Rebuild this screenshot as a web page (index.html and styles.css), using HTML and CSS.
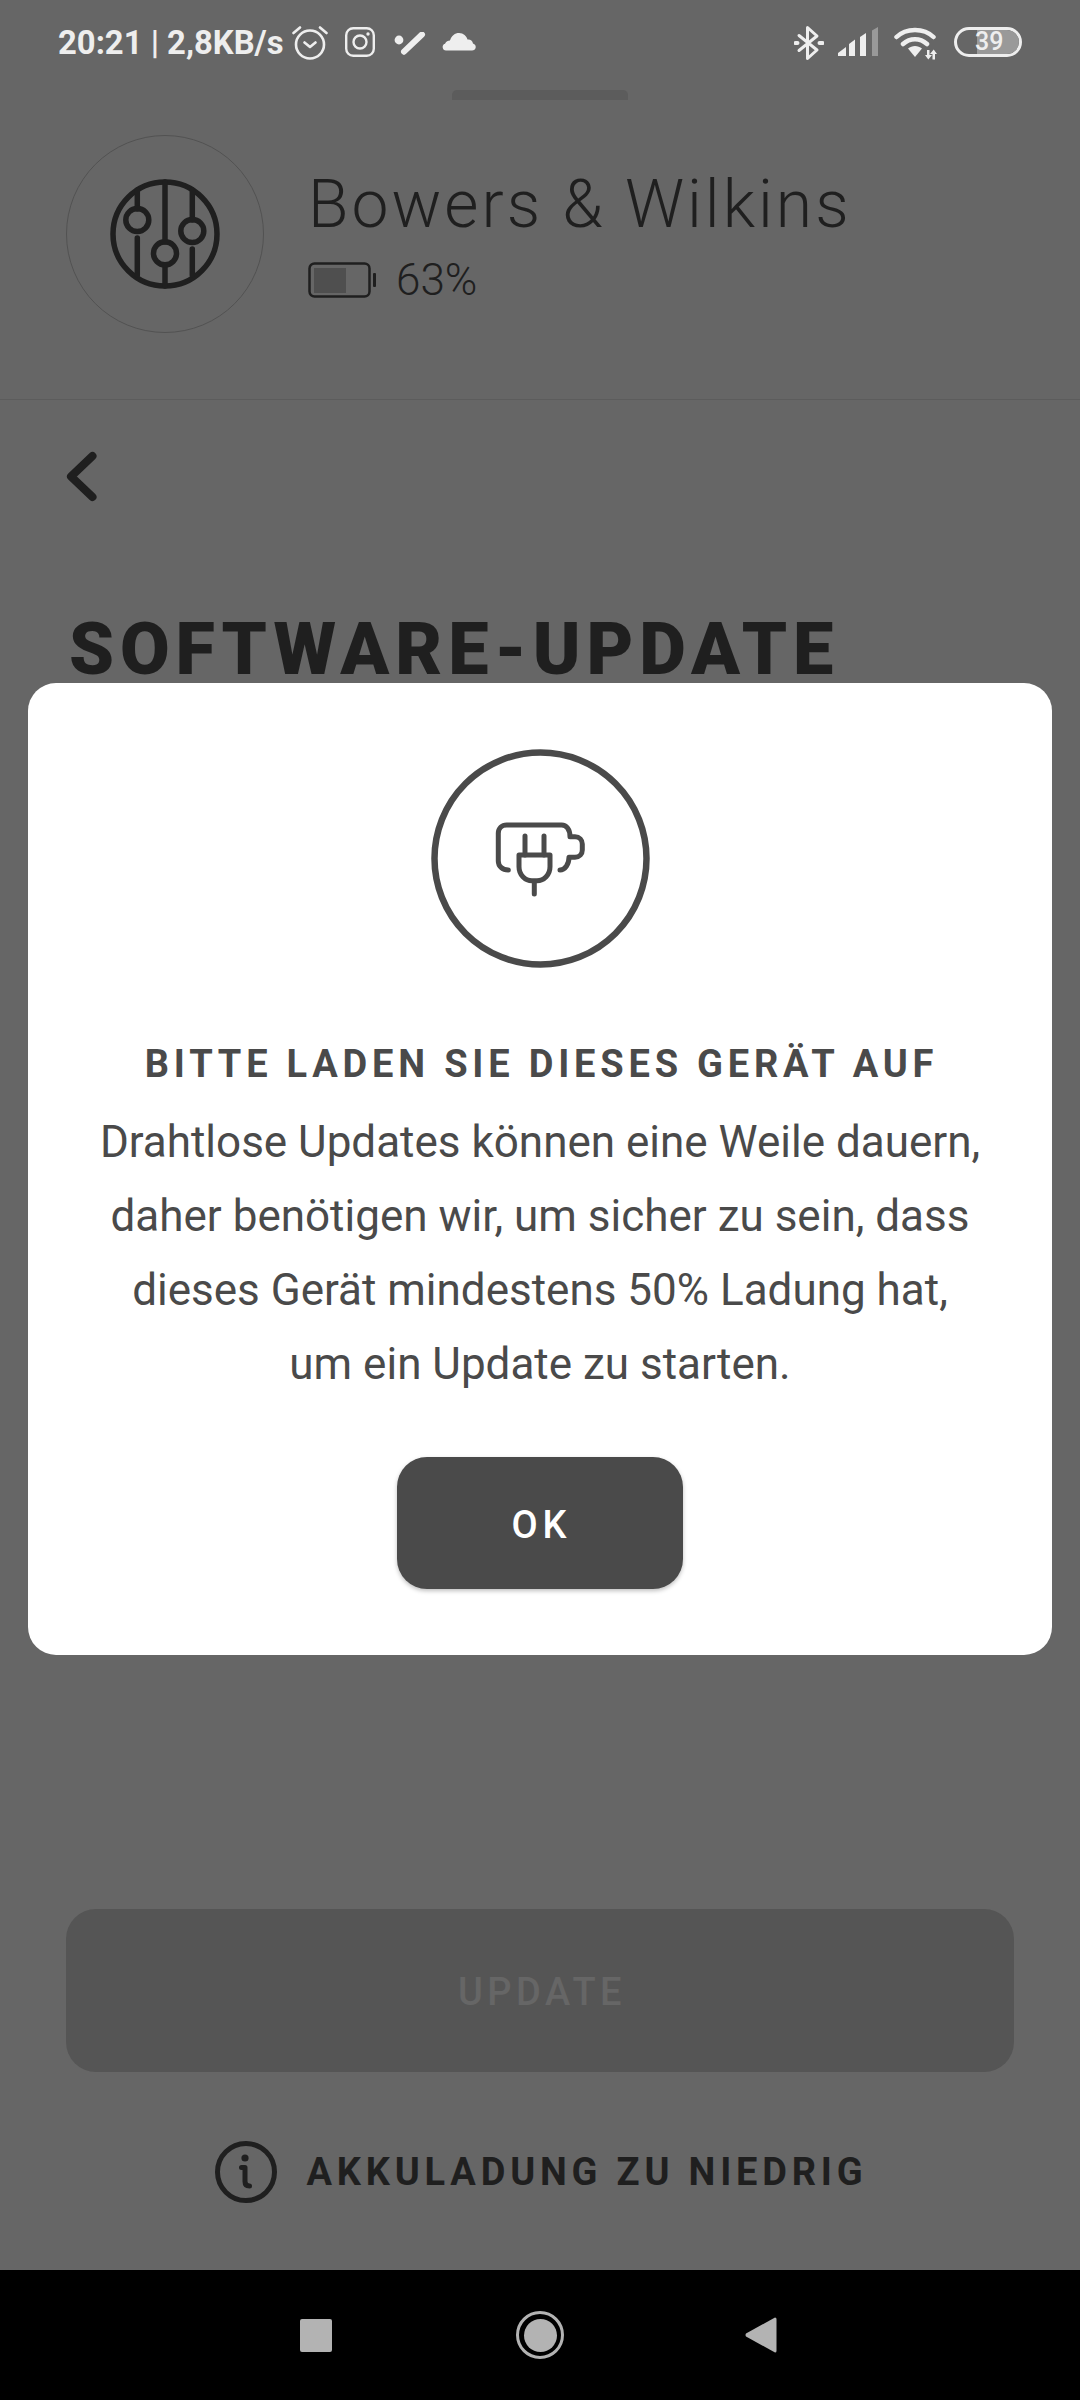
FILE: index.html
```html
<!DOCTYPE html>
<html lang="de">

<head>
    <meta charset="utf-8">
    <title>Software-Update</title>
    <link rel="stylesheet" href="styles.css">
</head>

<body>
    <div class="screen">
        <div class="status">
            <span class="clock">20:21 | 2,8KB/s</span>
            <svg class="alarm" width="36" height="36" viewBox="0 0 36 36" fill="none" stroke="#eee" stroke-width="2.6" stroke-linecap="round" stroke-linejoin="round">
                <circle cx="18" cy="19.500" r="14"/>
                <path d="M1.500 8 8 2.500M34.500 8 28 2.500M12.500 17.500 18 22l5.500-4.500"/>
            </svg>
            <svg class="insta" width="30" height="30" viewBox="0 0 30 30" fill="none" stroke="#eee" stroke-width="2.400">
                <rect x="1.200" y="1.200" width="27.600" height="27.600" rx="7"/>
                <circle cx="15" cy="15" r="6.500"/>
                <circle cx="23" cy="7" r="1.700" fill="#eee" stroke="none"/>
            </svg>
            <svg class="tick" width="32" height="24" viewBox="0 0 32 24" fill="#eee">
                <circle cx="5" cy="8" r="4.400"/>
                <path d="M10 19.700 28 2.500" stroke="#eee" stroke-width="6" stroke-linecap="round"/>
            </svg>
            <svg class="cloud" width="34" height="20" viewBox="0 0 34 20" fill="#eee">
                <path d="M4 18.500a3.500 3.500 0 0 1-1-6.800C4 9.500 6 8.500 8 8.500 9.500 3.500 13 1 17 1c4.500 0 7.500 3 8.500 6.500 2.500-.5 5 1 5.500 4 2 .8 3 2.200 2.700 4-.3 2-1.700 3-3.700 3z"/>
            </svg>
            <svg class="bluetooth" width="30" height="36" viewBox="0 0 30 36" fill="none" stroke="#eee" stroke-width="3" stroke-linecap="round" stroke-linejoin="round">
                <path d="M5 10.500 23 25 13.500 33.500V2.500L23 11 5 25.500"/>
                <path d="M1.500 18h2M25.500 18h3" stroke-width="4"/>
            </svg>
            <svg class="signal" width="40" height="30" viewBox="0 0 40 30">
                <path d="M0 29v-3l8-6v9zM11 29V17l6-4.500V29zM22 29V10l6-4v23z" fill="#eee"/>
                <path d="M34 29V3.500L40 0v29z" fill="#999"/>
            </svg>
            <svg class="wifi" width="44" height="34" viewBox="0 0 44 34" fill="none" stroke="#eee" stroke-width="4.500" stroke-linecap="round">
                <path d="M2.500 10C12 .5 30 .5 39.500 10M9 17c7-6.500 17-6.500 24 0"/>
                <path d="M14 21.500c4-3.500 10-3.500 14 0L21 30z" fill="#eee" stroke="none"/>
                <path d="M33 23h2.500v5H38l-3.700 4.500L31 28h2zM38.500 32.500V27H36l3.700-4.500 3.300 4.500h-2v5.500z" fill="#eee" stroke="none"/>
            </svg>
            <div class="batt">
                <div class="batt-level"></div>
                <span class="batt-num">39</span>
            </div>
        </div>

        <div class="handle"></div>

        <div class="device">
            <div class="device-icon">
                <svg width="110" height="110" viewBox="-55 -55 110 110" fill="none" stroke="#1f1f1f" stroke-width="5.500" stroke-linecap="round">
                    <circle r="52"/>
                    <path d="M0-52V8M0 31v21"/>
                    <path d="M-27.700-44v19M-27.700 4v37"/>
                    <path d="M27.300-44v30M27.300 15v26"/>
                    <circle cx="-27.700" cy="-14" r="11.500"/>
                    <circle cx="27.300" cy="-3" r="11.500"/>
                    <circle cy="19.300" r="11.500"/>
                </svg>
            </div>
            <div class="device-info">
                <div class="device-name">Bowers &amp; Wilkins</div>
                <div class="device-charge">
                    <svg width="68" height="36" viewBox="0 0 68 36">
                        <rect x="1.500" y="1.500" width="60" height="33" rx="5" fill="none" stroke="#1f1f1f" stroke-width="2.500"/>
                        <rect x="6" y="6" width="32" height="25" fill="#4f4f4f"/>
                        <rect x="65" y="11" width="3" height="14" rx="1" fill="#1f1f1f"/>
                    </svg>
                    <span>63%</span>
                </div>
            </div>
        </div>

        <div class="panel">
            <svg class="back" width="40" height="56" viewBox="0 0 40 56" fill="none" stroke="#1f1f1f" stroke-width="8" stroke-linecap="round" stroke-linejoin="round">
                <path d="M26.500 7 5 27.500 26.500 48"/>
            </svg>
            <h1 class="page-title">SOFTWARE-UPDATE</h1>
            <div class="update-btn">UPDATE</div>
            <div class="low-batt">
                <svg width="62" height="62" viewBox="0 0 62 62" fill="none" stroke="#1f1f1f" stroke-width="5" stroke-linecap="round" stroke-linejoin="round">
                    <circle cx="31" cy="31" r="28.500"/>
                    <path d="M26.500 26.500h3.500v14c0 3 1.500 4.500 4.500 4.500"/>
                    <circle cx="30" cy="17" r="3.600" fill="#1f1f1f" stroke="none"/>
                </svg>
                <span>AKKULADUNG ZU NIEDRIG</span>
            </div>
        </div>

        <div class="navbar">
            <div class="nav-square"></div>
            <div class="nav-home"><div class="nav-home-dot"></div></div>
            <svg width="32" height="38" viewBox="0 0 32 38">
                <path d="M30 1.500a1.500 1.500 0 0 1 1.500 1.500v32a1.500 1.500 0 0 1-1.500 1.500L1 20.500q-1-1.500 0-3z" fill="#b3b3b3"/>
            </svg>
        </div>

        <div class="modal">
            <div class="modal-icon">
                <svg width="219" height="219" viewBox="0 0 219 219" fill="none" stroke="#4a4a4a" stroke-width="5" stroke-linecap="round" stroke-linejoin="round">
                    <circle cx="109.500" cy="109.500" r="106" stroke-width="6.500"/>
                    <path d="M77.300 121c-6 0-10-4-10-9V84.300c0-5 3.500-8.300 8.400-8.300h55c4.500 0 8.300 4 8.300 11.700h5c4.500 0 7.300 3.300 7.300 7.300v6c0 4-2.800 7.300-7.300 7.300h-6c0 7-4 12.700-9 12.700"/>
                    <path d="M94 87v19M113 87v19"/>
                    <path d="M88 106h31v11.700c0 8-6 14-13 14h-5c-7 0-13-6-13-14zM103.300 131.700V145"/>
                </svg>
            </div>
            <h2 class="modal-title">BITTE LADEN SIE DIESES GERÄT AUF</h2>
            <p class="modal-text">Drahtlose Updates können eine Weile dauern,<br>daher benötigen wir, um sicher zu sein, dass<br>dieses Gerät mindestens 50% Ladung hat,<br>um ein Update zu starten.</p>
            <div class="ok-btn">OK</div>
        </div>
    </div>
</body>

</html>
```

FILE: styles.css
```css
body {
    margin: 0;
    background-color: #666;
    font-family: Roboto, "Noto Sans", sans-serif;
}

.screen {
    position: relative;
    width: 1080px;
    height: 2400px;
    overflow: hidden;
    display: flex;
    flex-direction: column;
    background-color: #666;
    color: #1f1f1f;
}

/* status bar */
.status {
    height: 90px;
    flex: none;
    box-sizing: border-box;
    padding: 25px 0 0 58px;
    display: flex;
    align-items: flex-start;
}

.clock {
    font-size: 32.800px;
    font-weight: 700;
    line-height: 36px;
    color: #eee;
    white-space: nowrap;
}

.alarm { margin-left: 8px; }
.insta { margin: 2px 0 0 17px; }
.tick { margin: 7px 0 0 19px; }
.cloud { margin: 7px 0 0 16px; }
.bluetooth { margin-left: auto; }
.signal { margin: 2px 0 0 14px; }
.wifi { margin: 2px 0 0 16px; }

.batt {
    position: relative;
    width: 68px;
    height: 30px;
    margin: 2px 58px 0 16px;
    box-sizing: border-box;
    border: 3px solid #eee;
    border-radius: 15px;
    overflow: hidden;
}

.batt-level {
    width: 42px;
    margin-left: 20px;
    height: 100%;
    background-color: #999;
    border-radius: 0 12px 12px 0;
}

.batt-num {
    position: absolute;
    left: 18px;
    top: 0;
    font-size: 25px;
    font-weight: 500;
    line-height: 24px;
    color: #eee;
}

.handle {
    flex: none;
    width: 176px;
    height: 10px;
    margin: 0 auto;
    border-radius: 5px 5px 0 0;
    background-color: #5c5c5c;
}

/* device header */
.device {
    flex: none;
    height: 300px;
    box-sizing: border-box;
    padding: 35px 0 0 66px;
    display: flex;
    align-items: flex-start;
    border-bottom: 1px solid #5c5c5c;
}

.device-icon {
    flex: none;
    width: 198px;
    height: 198px;
    box-sizing: border-box;
    border: 1px solid #525252;
    border-radius: 50%;
    display: flex;
    align-items: center;
    justify-content: center;
}

.device-info {
    margin-left: 44px;
    padding-top: 31px;
}

.device-name {
    font-size: 66px;
    font-weight: 300;
    line-height: 78px;
    letter-spacing: 3px;
    white-space: nowrap;
}

.device-charge {
    margin-top: 11px;
    display: flex;
    align-items: center;
    font-size: 44px;
    font-weight: 300;
    line-height: 50px;
}

.device-charge svg {
    margin-right: 20px;
}

/* panel behind the dialog */
.panel {
    flex: 1;
    display: flex;
    flex-direction: column;
    padding: 49px 66px 0;
}

.back {
    flex: none;
}

.page-title {
    margin: 103px 0 0 3px;
    font-size: 72px;
    font-weight: 900;
    line-height: 84px;
    letter-spacing: 5.900px;
    white-space: nowrap;
}

.update-btn {
    margin-top: auto;
    height: 163px;
    flex: none;
    box-sizing: border-box;
    padding: 2px 0 0 4px;
    border-radius: 30px;
    background-color: #555;
    color: #666;
    font-size: 38px;
    font-weight: 500;
    letter-spacing: 4.500px;
    display: flex;
    align-items: center;
    justify-content: center;
}

.low-batt {
    flex: none;
    height: 198px;
    box-sizing: border-box;
    padding: 2px 0 0 2px;
    display: flex;
    align-items: center;
    justify-content: center;
    font-size: 38px;
    font-weight: 700;
    letter-spacing: 4.800px;
}

.low-batt svg {
    margin-right: 30px;
}

/* nav bar */
.navbar {
    flex: none;
    height: 130px;
    box-sizing: border-box;
    padding-right: 3px;
    background-color: #000;
    display: flex;
    align-items: center;
    justify-content: center;
}

.nav-square {
    width: 32px;
    height: 33px;
    border-radius: 2px;
    background-color: #b3b3b3;
}

.nav-home {
    width: 48px;
    height: 48px;
    margin: 0 181px 0 184px;
    box-sizing: border-box;
    border: 3px solid #b3b3b3;
    border-radius: 50%;
    display: flex;
    align-items: center;
    justify-content: center;
}

.nav-home-dot {
    width: 33px;
    height: 33px;
    border-radius: 50%;
    background-color: #b3b3b3;
}

/* dialog */
.modal {
    position: absolute;
    left: 28px;
    top: 683px;
    width: 1024px;
    height: 972px;
    box-sizing: border-box;
    padding-top: 66px;
    border-radius: 28px;
    background-color: #fff;
    color: #4a4a4a;
    display: flex;
    flex-direction: column;
    align-items: center;
}

.modal-icon {
    height: 219px;
}

.modal-title {
    margin: 74px 0 0;
    padding-left: 3px;
    font-size: 38px;
    font-weight: 700;
    line-height: 44px;
    letter-spacing: 4.800px;
    white-space: nowrap;
}

.modal-text {
    margin: 19px 0 0;
    font-size: 44px;
    font-weight: 400;
    line-height: 74px;
    text-align: center;
    white-space: nowrap;
}

.ok-btn {
    width: 286px;
    height: 132px;
    margin-top: 56px;
    flex: none;
    box-sizing: border-box;
    padding: 3px 0 0 3px;
    border-radius: 30px;
    background-color: #4a4a4a;
    box-shadow: 0 2px 4px rgba(0, 0, 0, 0.25);
    color: #fff;
    font-size: 38px;
    font-weight: 500;
    letter-spacing: 5px;
    display: flex;
    align-items: center;
    justify-content: center;
}
```
